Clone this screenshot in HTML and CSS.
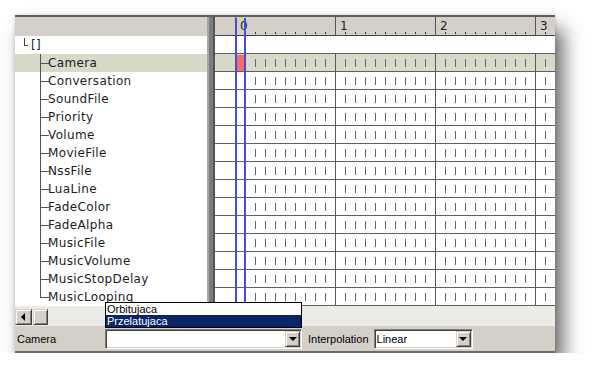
FILE: index.html
```html
<!DOCTYPE html>
<html lang="en">
<head>
    <meta charset="UTF-8">
    <meta name="viewport" content="width=device-width, initial-scale=1.0">
    <title>Cutscene Track Editor</title>
    <link rel="stylesheet" href="styles.css">
</head>
<body>
    <div class="editor">
        <div class="main">
            <!-- Track names -->
            <div class="tree">
                <div class="tree-header"></div>
                <div class="root">[]</div>
                <div class="node selected">Camera</div>
                <div class="node">Conversation</div>
                <div class="node">SoundFile</div>
                <div class="node">Priority</div>
                <div class="node">Volume</div>
                <div class="node">MovieFile</div>
                <div class="node">NssFile</div>
                <div class="node">LuaLine</div>
                <div class="node">FadeColor</div>
                <div class="node">FadeAlpha</div>
                <div class="node">MusicFile</div>
                <div class="node">MusicVolume</div>
                <div class="node">MusicStopDelay</div>
                <div class="node last">MusicLooping</div>
            </div>

            <div class="splitter"></div>

            <!-- Timeline -->
            <div class="timeline">
                <div class="ruler">
                    <span class="mark">0</span>
                    <span class="mark">1</span>
                    <span class="mark">2</span>
                    <span class="mark">3</span>
                </div>
                <div class="track empty"></div>
                <div class="track selected"></div>
                <div class="track"></div>
                <div class="track"></div>
                <div class="track"></div>
                <div class="track"></div>
                <div class="track"></div>
                <div class="track"></div>
                <div class="track"></div>
                <div class="track"></div>
                <div class="track"></div>
                <div class="track"></div>
                <div class="track"></div>
                <div class="track"></div>
                <div class="track"></div>

                <div class="cursor"></div>
                <div class="key"></div>
            </div>
        </div>

        <div class="hscroll">
            <div class="scroll-btn"><span class="arrow-left"></span></div>
            <div class="scroll-thumb"></div>
        </div>

        <div class="props">
            <span class="prop-label">Camera</span>
            <div class="combo camera-combo">
                <span class="combo-text"></span>
                <span class="combo-btn"><span class="arrow-down"></span></span>
            </div>
            <span class="interp-label">Interpolation</span>
            <div class="combo interp-combo">
                <span class="combo-text">Linear</span>
                <span class="combo-btn"><span class="arrow-down"></span></span>
            </div>
        </div>

        <!-- Open camera list -->
        <ul class="combo-list">
            <li>Orbitujaca</li>
            <li class="active">Przelatujaca</li>
        </ul>
    </div>
</body>
</html>
```

FILE: styles.css
```css
body {
    margin: 0;
    background: #fff;
    font-family: "DejaVu Sans", sans-serif;
}

.editor {
    position: relative;
    width: 540px;
    margin: 15px 0 0 15px;
    border-top: 2px solid #5e5e5e;
    border-bottom: 2px solid #6a6a6a;
    background: #d4d0c8;
    box-shadow: 8px 14px 18px rgba(0, 0, 0, 0.6), 0 0 4px rgba(0, 0, 0, 0.15);
}

.main {
    display: flex;
    height: 289px;
}

/* tree */
.tree {
    width: 192px;
    flex-shrink: 0;
    background: #fff;
    font-size: 12px;
    letter-spacing: 0.35px;
    color: #1c1c1c;
    overflow: hidden;
}

.tree-header {
    height: 19px;
    background: #d4d0c8;
}

.root, .node {
    position: relative;
    height: 18px;
    line-height: 18px;
    white-space: nowrap;
}

.root {
    padding-left: 16px;
}

.root::before {
    content: "";
    position: absolute;
    left: 9px;
    top: 2px;
    width: 3px;
    height: 7px;
    border-left: 1px solid #444;
    border-bottom: 1px solid #444;
}

.node {
    padding-left: 33px;
}

.node::before {
    content: "";
    position: absolute;
    left: 25px;
    top: 0;
    width: 8px;
    height: 9px;
    border-left: 1px solid #555;
    border-bottom: 1px solid #555;
}

.node::after {
    content: "";
    position: absolute;
    left: 25px;
    top: 9px;
    bottom: 0;
    border-left: 1px solid #555;
}

.node.last::after {
    display: none;
}

.node.selected {
    background: #d9d9c9;
}

.splitter {
    width: 8px;
    flex-shrink: 0;
    box-sizing: border-box;
    border-left: 2px solid #a8a8a8;
    border-right: 2px solid #555;
    background: #7c7c7c;
}

/* timeline */
.timeline {
    position: relative;
    flex: 1;
    overflow: hidden;
    background: #fff;
}

.ruler {
    display: flex;
    height: 18px;
    padding-left: 20px;
    border-bottom: 1px solid #404040;
    background: #d4d0c8 repeating-linear-gradient(to right, #333 0 1px, transparent 1px 10px) 20px 15px / calc(100% - 20px) 2px no-repeat;
}

.mark {
    flex: 0 0 100px;
    box-sizing: border-box;
    padding-left: 4px;
    border-left: 1px solid #555;
    font-size: 12px;
    line-height: 18px;
    color: #222;
}

.track {
    height: 17px;
    border-bottom: 1px solid #5e5e5e;
    background:
        repeating-linear-gradient(to right, #5a5a5a 0 1px, transparent 1px 100px) 20px 0 / calc(100% - 20px) 100% no-repeat,
        repeating-linear-gradient(to right, #666 0 1px, transparent 1px 10px) 20px 5px / calc(100% - 20px) 8px no-repeat;
    background-color: #fff;
}

.track.empty {
    background: #fff;
}

.track.selected {
    background-color: #d9d9c9;
}

.cursor {
    position: absolute;
    left: 20px;
    top: 1px;
    bottom: 0;
    width: 7px;
    border-left: 2px solid #4b4bcc;
    border-right: 2px solid #4b4bcc;
}

.key {
    position: absolute;
    left: 22px;
    top: 38px;
    width: 7px;
    height: 16px;
    background: #f26d6d;
}

/* scrollbar */
.hscroll {
    display: flex;
    height: 20px;
    box-sizing: border-box;
    padding-top: 3px;
    background: #ecebe6;
}

.scroll-btn, .scroll-thumb {
    height: 16px;
    box-sizing: border-box;
    background: #d4d0c8;
    border: 1px solid;
    border-color: #d4d0c8 #404040 #404040 #d4d0c8;
    box-shadow: inset 1px 1px 0 #fff, inset -1px -1px 0 #808080;
}

.scroll-btn {
    width: 17px;
    display: flex;
    align-items: center;
    justify-content: center;
}

.scroll-thumb {
    width: 15px;
    margin-left: 1px;
}

.arrow-left {
    width: 0;
    height: 0;
    border-top: 4px solid transparent;
    border-bottom: 4px solid transparent;
    border-right: 4px solid #000;
    margin-right: 2px;
}

/* properties bar */
.props {
    display: flex;
    align-items: center;
    height: 25px;
    font-family: "Liberation Sans", Arial, sans-serif;
    font-size: 11px;
    color: #000;
}

.prop-label {
    width: 90px;
    box-sizing: border-box;
    padding-left: 2px;
}

.combo {
    display: flex;
    align-items: center;
    height: 20px;
    box-sizing: border-box;
    padding: 1px;
    background: #fff;
    border: 1px solid;
    border-color: #808080 #fff #fff #808080;
    box-shadow: inset 1px 1px 0 #404040, inset -1px -1px 0 #d4d0c8;
}

.camera-combo {
    width: 197px;
}

.interp-label {
    margin-left: 6px;
}

.interp-combo {
    width: 99px;
    margin-left: 5px;
}

.combo-text {
    flex: 1;
    padding-left: 1px;
}

.combo-btn {
    display: flex;
    align-items: center;
    justify-content: center;
    width: 15px;
    height: 16px;
    box-sizing: border-box;
    background: #d4d0c8;
    border: 1px solid;
    border-color: #d4d0c8 #404040 #404040 #d4d0c8;
    box-shadow: inset 1px 1px 0 #fff, inset -1px -1px 0 #808080;
}

.arrow-down {
    width: 0;
    height: 0;
    border-left: 4px solid transparent;
    border-right: 4px solid transparent;
    border-top: 4px solid #000;
    margin-top: 1px;
}

/* dropped list */
.combo-list {
    position: absolute;
    left: 90px;
    top: 285px;
    width: 197px;
    box-sizing: border-box;
    margin: 0;
    padding: 0;
    list-style: none;
    background: #fff;
    border: 1px solid #000;
    font-family: "Liberation Sans", Arial, sans-serif;
    font-size: 11px;
}

.combo-list li {
    height: 12px;
    line-height: 12px;
    padding-left: 1px;
}

.combo-list li.active {
    background: #0a246a;
    color: #fff;
}
```
